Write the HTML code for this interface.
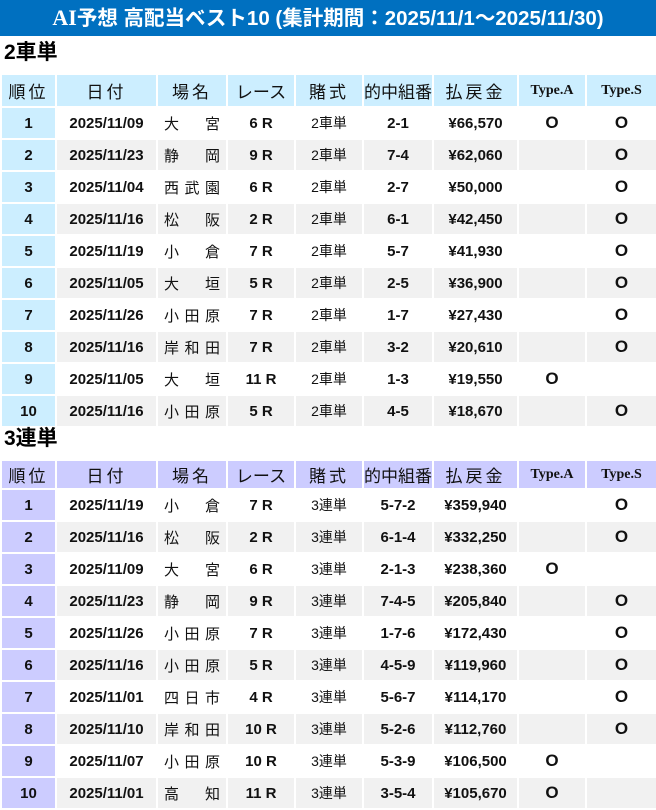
<!DOCTYPE html><html><head><meta charset="utf-8"><style>
body{margin:0;width:656px;height:809px;background:#fff;font-family:"Liberation Sans","Noto Sans CJK JP",sans-serif;overflow:hidden}
.title{height:36px;background:#0070c0;color:#fff;font-weight:bold;font-size:20.5px;line-height:36px;text-align:center}
.title .s{font-family:"Liberation Serif","Noto Serif CJK SC",serif;font-size:22px}
h2{margin:0;height:37px;font-size:21px;line-height:34px;padding-left:4px;font-weight:bold}
h2.two{height:31px;line-height:22px}
table{border-collapse:collapse;table-layout:fixed;width:656px}
td{height:30px;padding:0;border:2px solid #fff;text-align:center;font-size:15px;font-weight:bold;color:#111;white-space:nowrap}
tr.h td{background:#cceeff;font-size:17px;font-weight:normal;height:31px;letter-spacing:3px}
.b tr.h td{height:27px}
tr.h td.t{font-family:"Liberation Serif",serif;font-weight:bold;font-size:14px;letter-spacing:0}
tr.h td.n{letter-spacing:0}
tr:nth-child(odd):not(.h) td{background:#f1f1f1}
td.r{background:#cceeff!important}
.b td.r{background:#ccccff!important}
.b tr.h td{background:#ccccff}
td.v{text-align:justify;text-align-last:justify;padding:0 6px;font-weight:normal}
td.k{font-weight:normal;font-size:14px}
td.o{font-size:17px}
</style></head><body>
<div class="title"><span class="s">AI</span>予想 高配当ベスト10 (集計期間：2025/11/1～2025/11/30)</div>
<h2>2車単</h2>
<table>
<colgroup><col style="width:55px"><col style="width:101px"><col style="width:70px"><col style="width:68px"><col style="width:68px"><col style="width:70px"><col style="width:85px"><col style="width:68px"><col style="width:71px"></colgroup>
<tr class="h"><td>順位</td><td>日付</td><td>場名</td><td class="n">レース</td><td>賭式</td><td class="n">的中組番</td><td>払戻金</td><td class="t">Type.A</td><td class="t">Type.S</td></tr>
<tr><td class="r">1</td><td>2025/11/09</td><td class="v">大 宮</td><td>6 R</td><td class="k">2車単</td><td>2-1</td><td>¥66,570</td><td class="o">O</td><td class="o">O</td></tr>
<tr><td class="r">2</td><td>2025/11/23</td><td class="v">静 岡</td><td>9 R</td><td class="k">2車単</td><td>7-4</td><td>¥62,060</td><td></td><td class="o">O</td></tr>
<tr><td class="r">3</td><td>2025/11/04</td><td class="v">西 武 園</td><td>6 R</td><td class="k">2車単</td><td>2-7</td><td>¥50,000</td><td></td><td class="o">O</td></tr>
<tr><td class="r">4</td><td>2025/11/16</td><td class="v">松 阪</td><td>2 R</td><td class="k">2車単</td><td>6-1</td><td>¥42,450</td><td></td><td class="o">O</td></tr>
<tr><td class="r">5</td><td>2025/11/19</td><td class="v">小 倉</td><td>7 R</td><td class="k">2車単</td><td>5-7</td><td>¥41,930</td><td></td><td class="o">O</td></tr>
<tr><td class="r">6</td><td>2025/11/05</td><td class="v">大 垣</td><td>5 R</td><td class="k">2車単</td><td>2-5</td><td>¥36,900</td><td></td><td class="o">O</td></tr>
<tr><td class="r">7</td><td>2025/11/26</td><td class="v">小 田 原</td><td>7 R</td><td class="k">2車単</td><td>1-7</td><td>¥27,430</td><td></td><td class="o">O</td></tr>
<tr><td class="r">8</td><td>2025/11/16</td><td class="v">岸 和 田</td><td>7 R</td><td class="k">2車単</td><td>3-2</td><td>¥20,610</td><td></td><td class="o">O</td></tr>
<tr><td class="r">9</td><td>2025/11/05</td><td class="v">大 垣</td><td>11 R</td><td class="k">2車単</td><td>1-3</td><td>¥19,550</td><td class="o">O</td><td></td></tr>
<tr><td class="r">10</td><td>2025/11/16</td><td class="v">小 田 原</td><td>5 R</td><td class="k">2車単</td><td>4-5</td><td>¥18,670</td><td></td><td class="o">O</td></tr>
</table>
<h2 class="two">3連単</h2>
<table class="b">
<colgroup><col style="width:55px"><col style="width:101px"><col style="width:70px"><col style="width:68px"><col style="width:68px"><col style="width:70px"><col style="width:85px"><col style="width:68px"><col style="width:71px"></colgroup>
<tr class="h"><td>順位</td><td>日付</td><td>場名</td><td class="n">レース</td><td>賭式</td><td class="n">的中組番</td><td>払戻金</td><td class="t">Type.A</td><td class="t">Type.S</td></tr>
<tr><td class="r">1</td><td>2025/11/19</td><td class="v">小 倉</td><td>7 R</td><td class="k">3連単</td><td>5-7-2</td><td>¥359,940</td><td></td><td class="o">O</td></tr>
<tr><td class="r">2</td><td>2025/11/16</td><td class="v">松 阪</td><td>2 R</td><td class="k">3連単</td><td>6-1-4</td><td>¥332,250</td><td></td><td class="o">O</td></tr>
<tr><td class="r">3</td><td>2025/11/09</td><td class="v">大 宮</td><td>6 R</td><td class="k">3連単</td><td>2-1-3</td><td>¥238,360</td><td class="o">O</td><td></td></tr>
<tr><td class="r">4</td><td>2025/11/23</td><td class="v">静 岡</td><td>9 R</td><td class="k">3連単</td><td>7-4-5</td><td>¥205,840</td><td></td><td class="o">O</td></tr>
<tr><td class="r">5</td><td>2025/11/26</td><td class="v">小 田 原</td><td>7 R</td><td class="k">3連単</td><td>1-7-6</td><td>¥172,430</td><td></td><td class="o">O</td></tr>
<tr><td class="r">6</td><td>2025/11/16</td><td class="v">小 田 原</td><td>5 R</td><td class="k">3連単</td><td>4-5-9</td><td>¥119,960</td><td></td><td class="o">O</td></tr>
<tr><td class="r">7</td><td>2025/11/01</td><td class="v">四 日 市</td><td>4 R</td><td class="k">3連単</td><td>5-6-7</td><td>¥114,170</td><td></td><td class="o">O</td></tr>
<tr><td class="r">8</td><td>2025/11/10</td><td class="v">岸 和 田</td><td>10 R</td><td class="k">3連単</td><td>5-2-6</td><td>¥112,760</td><td></td><td class="o">O</td></tr>
<tr><td class="r">9</td><td>2025/11/07</td><td class="v">小 田 原</td><td>10 R</td><td class="k">3連単</td><td>5-3-9</td><td>¥106,500</td><td class="o">O</td><td></td></tr>
<tr><td class="r">10</td><td>2025/11/01</td><td class="v">高 知</td><td>11 R</td><td class="k">3連単</td><td>3-5-4</td><td>¥105,670</td><td class="o">O</td><td></td></tr>
</table>
</body></html>
